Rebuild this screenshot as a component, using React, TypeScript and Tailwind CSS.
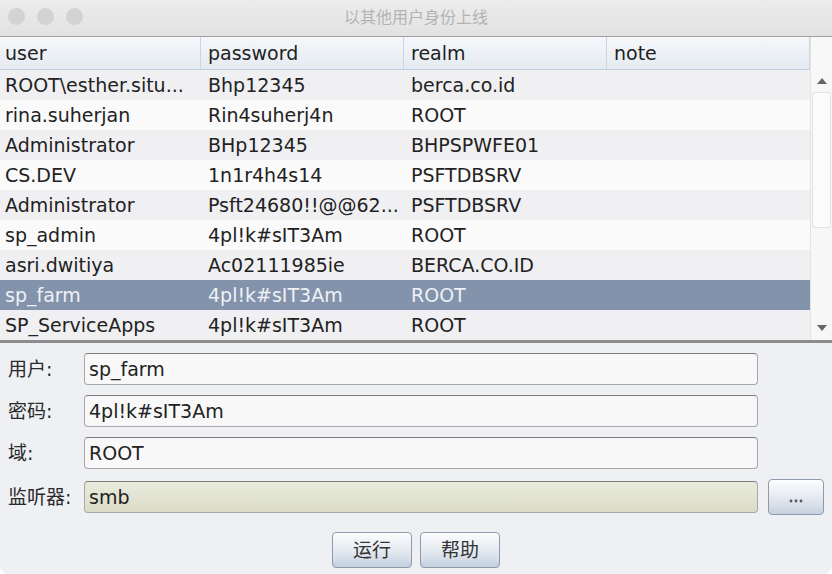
import React from "react"

type Row = { user: string; password: string; realm: string; note: string }

const rows: Row[] = [
  { user: "ROOT\\esther.situ...", password: "Bhp12345", realm: "berca.co.id", note: "" },
  { user: "rina.suherjan", password: "Rin4suherj4n", realm: "ROOT", note: "" },
  { user: "Administrator", password: "BHp12345", realm: "BHPSPWFE01", note: "" },
  { user: "CS.DEV", password: "1n1r4h4s14", realm: "PSFTDBSRV", note: "" },
  { user: "Administrator", password: "Psft24680!!@@62...", realm: "PSFTDBSRV", note: "" },
  { user: "sp_admin", password: "4pl!k#sIT3Am", realm: "ROOT", note: "" },
  { user: "asri.dwitiya", password: "Ac02111985ie", realm: "BERCA.CO.ID", note: "" },
  { user: "sp_farm", password: "4pl!k#sIT3Am", realm: "ROOT", note: "" },
  { user: "SP_ServiceApps", password: "4pl!k#sIT3Am", realm: "ROOT", note: "" },
]

const selected = 7

const font = { fontFamily: '"DejaVu Sans", "Noto Sans CJK SC", sans-serif' }

function Field({ label, value, tint }: { label: string; value: string; tint?: boolean }) {
  return (
    <div className="flex items-center h-[32px]">
      <div className="w-[84px] pl-[8px] text-[19px] text-[#2a2a2a]">{label}</div>
      <div
        className={
          "w-[674px] h-[32px] rounded-[4px] border border-[#a8a8a8] border-t-[#7d7d7d] flex items-center pl-[4px] text-[19px] text-[#222] " +
          (tint ? "bg-gradient-to-b from-[#e9eadc] to-[#dbddc8]" : "bg-[#f8f8f8]")
        }
      >
        {value}
      </div>
    </div>
  )
}

function Btn({ children, className }: { children: React.ReactNode; className?: string }) {
  return (
    <div
      className={
        "h-[36px] rounded-[4px] border border-[#8f9bab] bg-gradient-to-b from-[#fbfcfd] via-[#e6ebf2] to-[#c5d1df] flex items-center justify-center text-[#333] shadow-[inset_0_1px_0_#fff] " +
        (className ?? "")
      }
    >
      {children}
    </div>
  )
}

const cols = [
  { key: "user", w: "w-[201px] pl-[5px]" },
  { key: "password", w: "w-[203px] pl-[7px]" },
  { key: "realm", w: "w-[203px] pl-[7px]" },
  { key: "note", w: "w-[203px] pl-[7px]" },
] as const

export default function App() {
  return (
    <div className="w-[832px] h-[574px] bg-[#eef0f4] flex flex-col overflow-hidden rounded-b-[8px]" style={font}>
      {/* title bar */}
      <div className="relative h-[37px] bg-gradient-to-b from-[#ececec] to-[#e2e2e2] border-b border-[#a0a0a0] flex items-center justify-center">
        <div className="absolute left-[8px] top-[8px] flex gap-[12px]">
          <div className="w-[17px] h-[17px] rounded-full bg-[#d3d3d3]" />
          <div className="w-[17px] h-[17px] rounded-full bg-[#d3d3d3]" />
          <div className="w-[17px] h-[17px] rounded-full bg-[#d3d3d3]" />
        </div>
        <span className="text-[16px] text-[#b3b3b3]">以其他用户身份上线</span>
      </div>

      {/* table */}
      <div className="flex border-b-[3px] border-[#8c8c8c] bg-white">
        <div className="w-[810px]">
          <div className="flex h-[33px] bg-gradient-to-b from-[#f5f7fa] to-[#e5ebf2] border-b border-[#c3d0df] text-[19px] text-[#222]">
            {cols.map((c) => (
              <div key={c.key} className={c.w + " flex items-center border-r border-[#c8d5e4]"}>
                {c.key}
              </div>
            ))}
          </div>
          {rows.map((r, i) => (
            <div
              key={i}
              className={
                "flex h-[30px] items-center text-[19px] " +
                (i === selected ? "bg-[#8293ab] text-[#eef1f5]" : i % 2 === 0 ? "bg-[#f0f0f2] text-[#222]" : "bg-[#fafafa] text-[#222]")
              }
            >
              {cols.map((c) => (
                <div key={c.key} className={c.w + " whitespace-nowrap overflow-hidden"}>
                  {r[c.key]}
                </div>
              ))}
            </div>
          ))}
        </div>
        {/* scrollbar */}
        <div className="w-[22px] flex flex-col bg-[#f7f7f7] border-l border-[#e4e4e4]">
          <div className="h-[33px] bg-[#f8f8f8]" />
          <div className="h-[22px] flex items-center justify-center">
            <svg width="10" height="6" viewBox="0 0 10 6"><path d="M5 0 L10 6 L0 6 Z" fill="#666" /></svg>
          </div>
          <div className="h-[136px] mx-[1px] rounded-[3px] border border-[#e2e2e2] bg-[#fbfbfb]" />
          <div className="flex-1" />
          <div className="h-[24px] flex items-center justify-center">
            <svg width="10" height="6" viewBox="0 0 10 6"><path d="M0 0 L10 0 L5 6 Z" fill="#666" /></svg>
          </div>
        </div>
      </div>

      {/* form */}
      <div className="flex flex-col gap-[10px] pt-[10px]">
        <Field label="用户:" value="sp_farm" />
        <Field label="密码:" value="4pl!k#sIT3Am" />
        <Field label="域:" value="ROOT" />
        <div className="flex items-center">
          <Field label="监听器:" value="smb" tint />
          <Btn className="ml-[10px] w-[56px] pt-[8px]">
            <svg width="14" height="4" viewBox="0 0 14 4">
              <circle cx="2" cy="2" r="1.4" fill="#555" />
              <circle cx="7" cy="2" r="1.4" fill="#555" />
              <circle cx="12" cy="2" r="1.4" fill="#555" />
            </svg>
          </Btn>
        </div>
      </div>

      <div className="flex justify-center gap-[8px] pt-[17px]">
        <Btn className="w-[80px] text-[19px]">运行</Btn>
        <Btn className="w-[80px] text-[19px]">帮助</Btn>
      </div>
    </div>
  )
}
